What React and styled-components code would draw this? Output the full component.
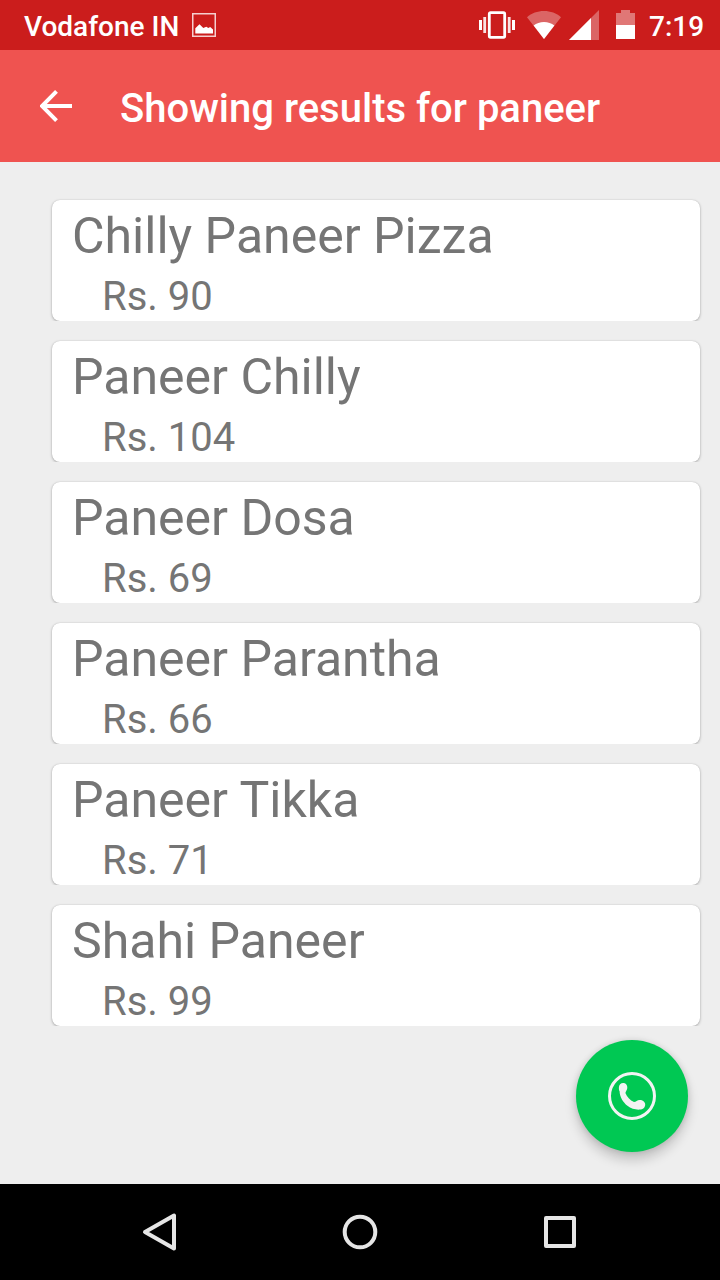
import React from 'react';
import styled, { createGlobalStyle } from 'styled-components';

const GlobalStyle = createGlobalStyle`
  * { box-sizing: border-box; }
  body { margin: 0; background: #eeeeee; font-family: Roboto, sans-serif; }
`;

const Screen = styled.div`
  position: relative;
  display: flex;
  flex-direction: column;
  width: 720px;
  height: 1280px;
  background: #eeeeee;
  overflow: hidden;
`;

const StatusBar = styled.header`
  display: flex;
  align-items: center;
  height: 50px;
  padding: 0 16px 0 24px;
  background: #cb1d1c;
  color: #fff;
  font-size: 28px;
  font-weight: 500;
  line-height: 48px;
`;

const Carrier = styled.span`
  width: 168px;
  padding-top: 4px;
  white-space: nowrap;
`;

const StatusIcons = styled.div`
  display: flex;
  align-items: center;
  margin-left: auto;
`;

const Clock = styled.time`
  width: 55px;
  padding-top: 4px;
  margin-left: 14px;
  white-space: nowrap;
`;

const Icon = styled.svg`
  display: block;
  flex: none;
  margin-left: ${(p) => p.$gap || 0}px;
`;

const AppBar = styled.div`
  display: flex;
  align-items: center;
  height: 112px;
  padding-left: 40px;
  background: #ef5350;
  color: #fff;
`;

const Title = styled.h1`
  margin: 0 0 0 48px;
  padding-top: 5px;
  font-size: 40px;
  font-weight: 500;
  line-height: 47px;
  white-space: nowrap;
`;

const List = styled.ul`
  flex: 1;
  margin: 0;
  padding: 20px 0 0;
  list-style: none;
`;

const Row = styled.li`
  height: 141px;
  padding: 18px 20px 2px 52px;
  clip-path: inset(0 0 2px 0);
`;

const Card = styled.article`
  height: 121px;
  padding: 7px 20px 0;
  border-radius: 8px;
  background: #fff;
  color: #757575;
  box-shadow: 0 1px 3px rgba(0, 0, 0, 0.28), 0 0 1px rgba(0, 0, 0, 0.2);
`;

const DishName = styled.div`
  font-size: 50px;
  line-height: 59px;
  white-space: nowrap;
`;

const Price = styled.div`
  padding: 7px 0 0 30px;
  font-size: 40px;
  line-height: 47px;
  white-space: nowrap;
`;

const CallButton = styled.button`
  position: absolute;
  right: 32px;
  bottom: 128px;
  display: flex;
  align-items: center;
  justify-content: center;
  width: 112px;
  height: 112px;
  padding: 0;
  border: 0;
  border-radius: 50%;
  background: #00c853;
  box-shadow: 0 8px 12px rgba(0, 0, 0, 0.18), 0 0 6px rgba(0, 0, 0, 0.12);
`;

const NavBar = styled.nav`
  display: flex;
  justify-content: center;
  gap: 160px;
  align-items: center;
  height: 96px;
  background: #000;
`;

const dishes = [
  { name: 'Chilly Paneer Pizza', price: 90 },
  { name: 'Paneer Chilly', price: 104 },
  { name: 'Paneer Dosa', price: 69 },
  { name: 'Paneer Parantha', price: 66 },
  { name: 'Paneer Tikka', price: 71 },
  { name: 'Shahi Paneer', price: 99 },
];

const PictureIcon = () => (
  <Icon width="24" height="24" viewBox="0 0 24 24">
    <rect x=".75" y=".75" width="22.5" height="22.5" fill="none" stroke="#f5cfcf" strokeWidth="1.5" />
    <path d="M3.3 20.5v-5.2l4.2-4 3.8 3.7 3-1.2 2 1.2 1.9-.9 2.8 2.3v4.1z" fill="#fff" />
  </Icon>
);

const VibrateIcon = () => (
  <Icon width="36" height="28" viewBox="0 0 36 28">
    <rect x="10.3" y="1.7" width="15.4" height="24.6" rx="1.2" fill="none" stroke="#fff" strokeWidth="2.8" />
    <path d="M0 9h3v10H0zM33 9h3v10h-3z" fill="#fff" />
    <path d="M4.3 6h2.8v16H4.3zM28.8 6h2.8v16h-2.8z" fill="#fff" fillOpacity=".88" />
  </Icon>
);

const WifiIcon = () => (
  <Icon $gap={12} width="34" height="28" viewBox="0 0 34 28">
    <path d="M17 28 0 6.2C4.5 2.2 10.5 0 17 0s12.5 2.2 17 6.2z" fill="#fff" fillOpacity=".32" />
    <path d="M17 28 6.6 14.6C9.5 12.300 13 11 17 11s7.5 1.3 10.4 3.6z" fill="#fff" />
  </Icon>
);

const SignalIcon = () => (
  <Icon $gap={8} width="30" height="30" viewBox="0 0 30 30">
    <path d="M0 30 30 0v30z" fill="#fff" fillOpacity=".32" />
    <path d="M0 30 22 8v22z" fill="#fff" />
  </Icon>
);

const BatteryIcon = () => (
  <Icon $gap={17} width="19" height="30" viewBox="0 0 19 30">
    <path d="M5 0h9v3h5v12H0V3h5z" fill="#fff" fillOpacity=".4" />
    <path d="M0 15h19v14H0z" fill="#fff" />
  </Icon>
);

const BackArrow = () => (
  <Icon width="32" height="32" viewBox="0 0 32 32">
    <path d="M32 16H3M16.5 1.4 2 16l14.5 14.6" fill="none" stroke="#fff" strokeWidth="4" />
  </Icon>
);

const PhoneIcon = () => (
  <Icon width="48" height="48" viewBox="0 0 48 48">
    <circle cx="24" cy="24" r="22.5" fill="none" stroke="#f3f3f3" strokeWidth="3" />
    <path
      d="M15.200 11c2.700 0 4.300 2.200 4.100 5-.1 1.900-1.500 3.300-1.900 5 1.500 4 4.600 7.200 8.600 9 2-.1 3.300-1.900 5.500-2 3-.1 5.700 1.700 5.700 4.600 0 3-2.300 5-5.400 5-4.200.3-8.700-.8-12.400-3.800-4.300-3.600-7.600-8.800-7.800-14.600-.7-1-.7-2.400-.7-3.700 0-2.700 1.800-4.500 4.300-4.500z"
      fill="#f3f3f3"
    />
  </Icon>
);

export default function App() {
  return (
    <Screen>
      <GlobalStyle />
      <StatusBar>
        <Carrier>Vodafone IN</Carrier>
        <PictureIcon />
        <StatusIcons>
          <VibrateIcon />
          <WifiIcon />
          <SignalIcon />
          <BatteryIcon />
          <Clock>7:19</Clock>
        </StatusIcons>
      </StatusBar>
      <AppBar>
        <BackArrow />
        <Title>Showing results for paneer</Title>
      </AppBar>
      <List>
        {dishes.map((dish) => (
          <Row key={dish.name}>
            <Card>
              <DishName>{dish.name}</DishName>
              <Price>Rs. {dish.price}</Price>
            </Card>
          </Row>
        ))}
      </List>
      <CallButton aria-label="Call">
        <PhoneIcon />
      </CallButton>
      <NavBar>
        <Icon width="40" height="40" viewBox="0 0 40 40" fill="none" stroke="#e6e6e6" strokeWidth="4" strokeLinejoin="round">
          <path d="M34 3.500v33L5 20z" />
        </Icon>
        <Icon width="40" height="40" viewBox="0 0 40 40" fill="none" stroke="#e6e6e6" strokeWidth="4">
          <circle cx="20" cy="20" r="15.300" />
        </Icon>
        <Icon width="40" height="40" viewBox="0 0 40 40" fill="none" stroke="#e6e6e6" strokeWidth="4" strokeLinejoin="round">
          <rect x="6" y="6" width="28" height="28" />
        </Icon>
      </NavBar>
    </Screen>
  );
}
